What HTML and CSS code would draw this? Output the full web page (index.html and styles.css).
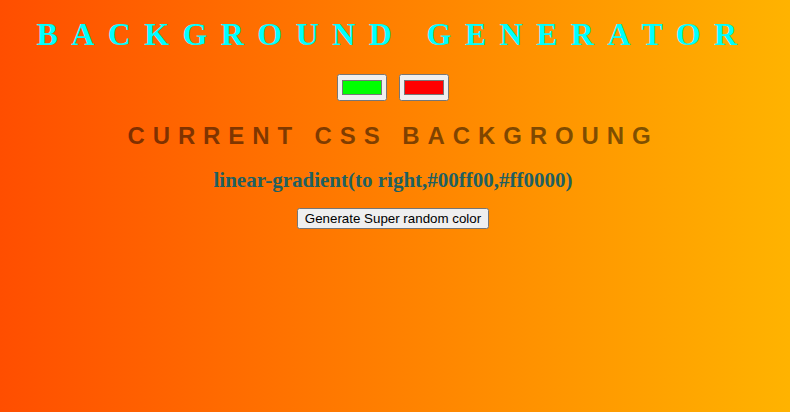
FILE: index.html
```html
<!DOCTYPE html>
<html lang="en">
<head>
<meta charset="utf-8">
<title>Background Generator</title>
<link rel="stylesheet" href="styles.css">
</head>
<body class="page">
  <h1 class="title">Background Generator</h1>
  <div class="pickers">
    <input class="picker" type="color" name="color1" value="#00ff00">
    <input class="picker" type="color" name="color2" value="#ff0000">
  </div>
  <h3 class="subtitle">Current CSS Backgroung</h3>
  <p class="css-value">linear-gradient(to right,#00ff00,#ff0000)</p>
  <div class="actions">
    <button class="random-btn" type="button">Generate Super random color</button>
  </div>
</body>
</html>
```
FILE: styles.css
```css
html {
  height: 100%;
}
.page {
  margin: 0;
  min-height: 100%;
  padding: 1px 4px 0 0;
  box-sizing: border-box;
  background: linear-gradient(to right, #ff4e00, #ffb300);
  text-align: center;
  font-family: "Liberation Serif", serif;
}
.title {
  margin: 15px 0 0 1px;
  font-family: "Liberation Serif", serif;
  font-weight: bold;
  font-size: 32px;
  line-height: 37px;
  letter-spacing: 13.4px;
  text-transform: uppercase;
  color: #00ffff;
}
.pickers {
  display: flex;
  justify-content: center;
  gap: 12px;
  margin-top: 21px;
}
.picker {
  width: 50px;
  height: 27px;
  margin: 0;
}
.subtitle {
  margin: 21px 0 0;
  font-family: "Liberation Sans", Arial, sans-serif;
  font-weight: bold;
  font-size: 24px;
  line-height: 28px;
  letter-spacing: 7.9px;
  text-transform: uppercase;
  color: rgba(0, 0, 0, 0.5);
}
.css-value {
  margin: 18px 0 0;
  font-family: "Liberation Serif", serif;
  font-weight: bold;
  font-size: 21px;
  line-height: 24px;
  color: #1f6060;
}
.actions {
  margin-top: 16px;
}
.random-btn {
  font-family: "Liberation Sans", Arial, sans-serif;
  font-size: 13.333px;
  margin: 0;
}
```
